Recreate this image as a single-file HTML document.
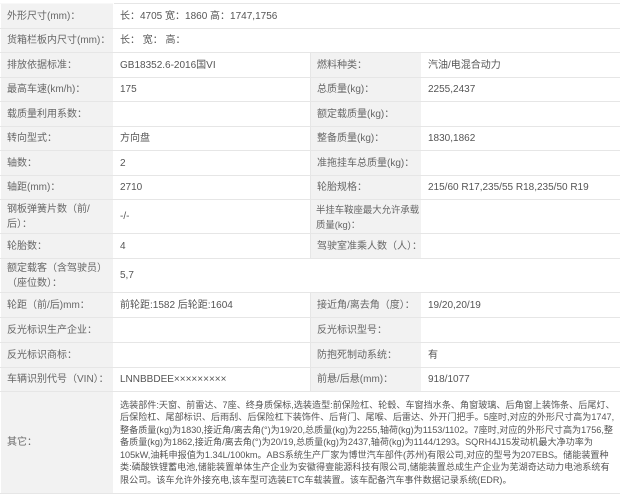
<!DOCTYPE html>
<html><head><meta charset="utf-8"><style>
*{margin:0;padding:0;box-sizing:border-box}
body{width:620px;height:495px;background:#fff;font-family:"Liberation Sans","Noto Sans CJK SC",sans-serif;font-size:10px;color:#555;overflow:hidden;position:relative}
table{position:absolute;left:0;top:3px;border-collapse:collapse;width:620px;table-layout:fixed}
td{border:1px solid #e6e6e6;padding:0 6px;vertical-align:middle;line-height:15px;white-space:nowrap;overflow:hidden}
td.l{background:#f2f2f2;border-color:#f8f8f8 #fff #e6e6e6 #fff;color:#666}
td.w{white-space:normal}
</style></head><body>
<table>
<colgroup><col style="width:113px"><col style="width:197px"><col style="width:111px"><col style="width:199px"></colgroup>
<tr style="height:25px"><td class="l">外形尺寸(mm)：</td><td colspan="3">长：4705 宽：1860 高：1747,1756</td></tr>
<tr style="height:24px"><td class="l">货箱栏板内尺寸(mm)：</td><td colspan="3">长： 宽： 高：</td></tr>
<tr style="height:25px"><td class="l">排放依据标准：</td><td>GB18352.6-2016国VI</td><td class="l">燃料种类：</td><td>汽油/电混合动力</td></tr>
<tr style="height:24px"><td class="l">最高车速(km/h)：</td><td>175</td><td class="l">总质量(kg)：</td><td>2255,2437</td></tr>
<tr style="height:25px"><td class="l">载质量利用系数：</td><td></td><td class="l">额定载质量(kg)：</td><td></td></tr>
<tr style="height:24px"><td class="l">转向型式：</td><td>方向盘</td><td class="l">整备质量(kg)：</td><td>1830,1862</td></tr>
<tr style="height:25px"><td class="l">轴数：</td><td>2</td><td class="l">准拖挂车总质量(kg)：</td><td></td></tr>
<tr style="height:24px"><td class="l">轴距(mm)：</td><td>2710</td><td class="l">轮胎规格：</td><td>215/60 R17,235/55 R18,235/50 R19</td></tr>
<tr style="height:34px"><td class="l">钢板弹簧片数（前/<br>后）：</td><td>-/-</td><td class="l" style="padding-left:5px;font-size:9.4px">半挂车鞍座最大允许承载<br>质量(kg)：</td><td></td></tr>
<tr style="height:25px"><td class="l">轮胎数：</td><td>4</td><td class="l">驾驶室准乘人数（人）：</td><td></td></tr>
<tr style="height:34px"><td class="l">额定载客（含驾驶员）<br>（座位数）：</td><td colspan="3">5,7</td></tr>
<tr style="height:25px"><td class="l">轮距（前/后)mm：</td><td>前轮距:1582 后轮距:1604</td><td class="l">接近角/离去角（度）：</td><td>19/20,20/19</td></tr>
<tr style="height:25px"><td class="l">反光标识生产企业：</td><td></td><td class="l">反光标识型号：</td><td></td></tr>
<tr style="height:25px"><td class="l">反光标识商标：</td><td></td><td class="l">防抱死制动系统：</td><td>有</td></tr>
<tr style="height:24px"><td class="l">车辆识别代号（VIN）：</td><td>LNNBBDEE×××××××××</td><td class="l">前悬/后悬(mm)：</td><td>918/1077</td></tr>
<tr style="height:102px"><td class="l">其它：</td><td colspan="3" class="w" style="font-size:9.1px;line-height:12.4px;padding:1px 4px 1px 6px">选装部件:天窗、前雷达、7座、终身质保标,选装造型:前保险杠、轮毂、车窗挡水条、角窗玻璃、后角窗上装饰条、后尾灯、后保险杠、尾部标识、后雨刮、后保险杠下装饰件、后背门、尾喉、后雷达、外开门把手。5座时,对应的外形尺寸高为1747,整备质量(kg)为1830,接近角/离去角(°)为19/20,总质量(kg)为2255,轴荷(kg)为1153/1102。7座时,对应的外形尺寸高为1756,整备质量(kg)为1862,接近角/离去角(°)为20/19,总质量(kg)为2437,轴荷(kg)为1144/1293。SQRH4J15发动机最大净功率为105kW,油耗申报值为1.34L/100km。ABS系统生产厂家为博世汽车部件(苏州)有限公司,对应的型号为207EBS。储能装置种类:磷酸铁锂蓄电池,储能装置单体生产企业为安徽得壹能源科技有限公司,储能装置总成生产企业为芜湖奇达动力电池系统有限公司。该车允许外接充电,该车型可选装ETC车载装置。该车配备汽车事件数据记录系统(EDR)。</td></tr>
</table>
</body></html>
